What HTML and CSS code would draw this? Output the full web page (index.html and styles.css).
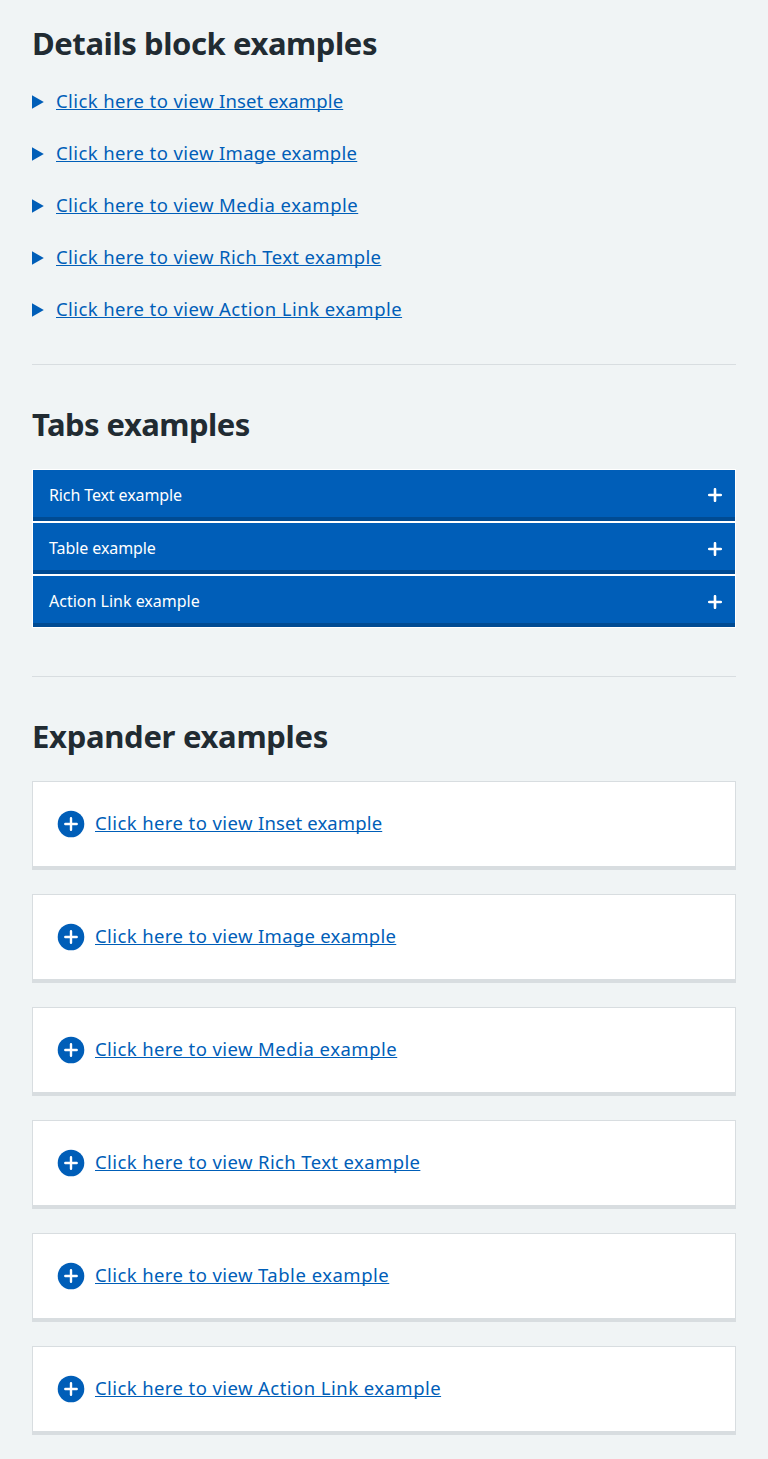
FILE: index.html
```html
<!DOCTYPE html>
<html lang="en">
<head>
<meta charset="utf-8">
<title>Component examples</title>
<link rel="stylesheet" href="styles.css">
</head>
<body>
<svg class="defs" width="0" height="0" aria-hidden="true">
  <symbol id="arrow" viewBox="0 0 12 14"><path d="M0 0.2L11.8 7L0 13.8Z" fill="currentColor"/></symbol>
  <symbol id="plus" viewBox="0 0 14 14"><path d="M7 1.2V12.8M1.2 7H12.8" fill="none" stroke="currentColor" stroke-width="2.6" stroke-linecap="round"/></symbol>
  <symbol id="disc" viewBox="0 0 28 28"><circle cx="14" cy="14" r="13.3" fill="#005eb8"/><path d="M14 8.3V19.7M8.3 14H19.7" fill="none" stroke="#fff" stroke-width="2.4" stroke-linecap="round"/></symbol>
</svg>
<main class="page">
  <section>
    <h2 class="heading heading-details">Details block examples</h2>
    <div class="details-list">
      <div class="details"><svg class="arrow"><use href="#arrow"/></svg><a class="link">Click here to view <span class="inset">Inset example</span></a></div>
      <div class="details"><svg class="arrow"><use href="#arrow"/></svg><a class="link">Click here to view <span class="image">Image example</span></a></div>
      <div class="details"><svg class="arrow"><use href="#arrow"/></svg><a class="link">Click here to view <span class="media">Media example</span></a></div>
      <div class="details"><svg class="arrow"><use href="#arrow"/></svg><a class="link">Click here to view <span class="rich">Rich Text example</span></a></div>
      <div class="details"><svg class="arrow"><use href="#arrow"/></svg><a class="link">Click here to view <span class="action">Action Link example</span></a></div>
    </div>
  </section>
  <hr class="rule">
  <section>
    <h2 class="heading heading-tabs">Tabs examples</h2>
    <div class="tabs">
      <div class="tab"><span class="tab-rich">Rich Text example</span><svg class="plus plus-first"><use href="#plus"/></svg></div>
      <div class="tab"><span class="tab-table">Table example</span><svg class="plus"><use href="#plus"/></svg></div>
      <div class="tab"><span class="tab-action">Action Link example</span><svg class="plus"><use href="#plus"/></svg></div>
    </div>
  </section>
  <hr class="rule rule-tabs">
  <section>
    <h2 class="heading heading-expander">Expander examples</h2>
    <div class="expanders">
      <div class="expander"><svg class="disc"><use href="#disc"/></svg><a class="link">Click here to view <span class="inset">Inset example</span></a></div>
      <div class="expander"><svg class="disc"><use href="#disc"/></svg><a class="link">Click here to view <span class="image">Image example</span></a></div>
      <div class="expander"><svg class="disc"><use href="#disc"/></svg><a class="link">Click here to view <span class="media">Media example</span></a></div>
      <div class="expander"><svg class="disc"><use href="#disc"/></svg><a class="link">Click here to view <span class="rich">Rich Text example</span></a></div>
      <div class="expander"><svg class="disc"><use href="#disc"/></svg><a class="link">Click here to view <span class="table">Table example</span></a></div>
      <div class="expander"><svg class="disc"><use href="#disc"/></svg><a class="link">Click here to view <span class="action">Action Link example</span></a></div>
    </div>
  </section>
</main>
</body>
</html>
```
FILE: styles.css
```css
* { box-sizing: border-box; }
body { margin: 0; background: #f0f4f5; color: #212b32; font-family: "Noto Sans", "Open Sans", sans-serif; }
.defs { display: block; }
.page { padding: 24px 32px; }
.heading { margin: 0 0 24px; height: 40px; font-size: 31px; line-height: 38px; font-weight: 700; white-space: nowrap; }
.heading-details { letter-spacing: -0.42px; }
.heading-tabs { letter-spacing: -0.53px; }
.heading-expander { letter-spacing: -0.3px; }
.details-list { display: flex; flex-direction: column; gap: 24px; }
.details { display: flex; align-items: center; height: 28px; gap: 12px; }
.arrow { width: 12px; height: 14px; color: #005eb8; }
.link { padding-bottom: 2px; color: #005eb8; font-size: 18.5px; line-height: 28px; letter-spacing: 0.4px; white-space: nowrap; text-decoration: underline; text-decoration-thickness: 1px; text-underline-offset: 1px; text-decoration-skip-ink: none; }
.inset { letter-spacing: 0.12px; }
.image { letter-spacing: 0.27px; }
.media { letter-spacing: 0.5px; }
.rich { letter-spacing: 0.38px; }
.table { letter-spacing: 0.5px; }
.action { letter-spacing: 0.46px; }
.rule { height: 1px; margin: 40px 0; border: 0; background: #d8dde0; }
.rule-tabs { margin-top: 48px; }
.tabs { display: flex; flex-direction: column; gap: 2px; padding: 1px; background: #fff; }
.tab { display: flex; align-items: center; justify-content: space-between; height: 51px; padding: 3px 13px 0 16px; background: #005eb8; border-bottom: 4px solid #004b93; color: #fff; font-size: 16px; line-height: 24px; white-space: nowrap; }
.tab-rich { letter-spacing: -0.11px; }
.tab-table { letter-spacing: -0.08px; }
.plus { width: 14px; height: 14px; margin-top: 2px; }
.plus-first { margin-top: 0; }
.expanders { display: flex; flex-direction: column; gap: 24px; }
.expander { display: flex; align-items: center; height: 89px; padding: 0 24px; gap: 10px; background: #fff; border: 1px solid #d8dde0; border-bottom-width: 4px; }
.disc { width: 28px; height: 28px; }
```
